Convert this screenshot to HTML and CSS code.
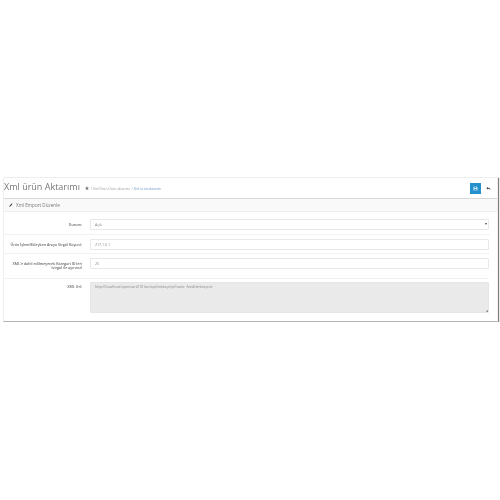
FILE: index.html
```html
<!DOCTYPE html>
<html>
<head>
    <title>Xml ürün Aktarımı</title>
    <link rel="stylesheet" href="styles.css">
</head>
<body>
    <div class="card">
        <div class="page-header">
            <h1>Xml ürün Aktarımı</h1>
            <svg class="home" viewBox="0 0 10 10"><path d="M5 1 0.5 5.2 1.2 5.8 5 2.4 8.8 5.8 9.5 5.2ZM2 6V9.5H4.2V7H5.8V9.5H8V6L5 3.3Z"/></svg>
            <ul class="crumbs">
                <li>/ Xml Ürün Ürün aktarımı</li>
                <li class="current">/ Xml ürün aktarımı</li>
            </ul>
            <div class="buttons">
                <button type="button" class="btn-save"><svg viewBox="0 0 10 10"><path d="M1 1H7.5L9 2.5V9H1ZM3 1.5V4H6.5V1.5ZM3 6V8.5H7V6Z"/></svg></button>
                <button type="button" class="btn-back"><svg viewBox="0 0 10 10"><path d="M4 2 .8 4.6 4 7.2V5.4C6 5.4 7.6 6 8.6 8 8.6 5.4 7 3.6 4 3.6Z"/></svg></button>
            </div>
        </div>
        <div class="panel-heading">
            <svg class="pencil" viewBox="0 0 10 10"><path d="M.8 9.2 1.5 6.6 6.6 1.5 8.5 3.4 3.4 8.5ZM7.2 .9 7.8 .4 9.6 2.2 9.1 2.8Z"/></svg>
            <span>Xml Emport Düzenle</span>
        </div>
        <form class="form">
            <div class="row row-select">
                <label for="status">Durum:</label>
                <div class="field field-select" id="status">Açık<span class="caret"></span></div>
            </div>
            <div class="row row-ip">
                <label for="sep">Ürün İşlemlEkleyken Araya Virgül Koyun):</label>
                <div class="field" id="sep">217.1.0.1</div>
            </div>
            <div class="row row-cat">
                <label for="cat">XML'e dahil edilmeyecek Kategori ID leri<br>(virgül ile ayırınız)</label>
                <div class="field" id="cat">25</div>
            </div>
            <div class="row row-last">
                <label for="url">XML Url:</label>
                <div class="field field-area" id="url">http://localhost/opencart2101an/api/index.php?route=feed/xmlexport<span class="grip"></span></div>
            </div>
        </form>
    </div>
</body>
</html>
```

FILE: styles.css
```css
body {
    margin: 0;
    padding: 177px 2px 0 3px;
    background-color: #ffffff;
    font-family: "Open Sans", sans-serif;
    color: #666666;
}

.card {
    height: 145px;
    box-sizing: border-box;
    background-color: #ffffff;
    border: 1px solid #eeeeee;
    border-bottom: 1px solid #b4b4b4;
    box-shadow: 1px 1px 1px #808080;
    filter: blur(0.4px);
}

.page-header {
    display: flex;
    align-items: center;
    height: 20px;
    padding-right: 3px;
    border-bottom: 1px solid #d8d8d8;
}

h1 {
    margin: 0 0 2px 0;
    font-size: 9px;
    font-weight: 400;
    line-height: 18px;
    color: #777777;
    white-space: nowrap;
}

.home {
    width: 4px;
    height: 4px;
    margin: 0 0 0 5px;
    fill: #666666;
}

.crumbs {
    display: flex;
    gap: 2px;
    margin: 0 0 0 2px;
    padding: 0;
    list-style: none;
    font-size: 3.3px;
    color: #999999;
}

.crumbs .current {
    color: #6f93c4;
}

.buttons {
    display: flex;
    gap: 2px;
    margin-left: auto;
}

.buttons button {
    display: flex;
    align-items: center;
    justify-content: center;
    width: 11px;
    height: 11px;
    padding: 0;
    border: none;
}

.buttons svg {
    width: 5px;
    height: 5px;
}

.btn-save {
    background-color: #2590cc;
    fill: #d8ecf8;
}

.btn-back {
    background-color: #ffffff;
    fill: #333333;
}

.panel-heading {
    display: flex;
    align-items: center;
    gap: 3px;
    height: 12px;
    padding-left: 5px;
    background-color: #f9f9f9;
    border-bottom: 1px solid #eeeeee;
    font-size: 4.6px;
    color: #777777;
}

.pencil {
    width: 4px;
    height: 4px;
    fill: #444444;
}

.form {
    padding: 0 8px 0 0;
}

.row {
    display: flex;
    border-bottom: 1px solid #f2f2f2;
}

.row-select {
    padding: 7px 0 4px;
}

.row-ip {
    padding: 4px 0 3px;
}

.row-cat {
    padding: 4px 0 7px;
}

.row-last {
    border-bottom: none;
    padding-top: 3px;
}

label {
    flex: 0 0 86px;
    padding: 3.5px 8px 0 0;
    box-sizing: border-box;
    font-size: 3.6px;
    font-weight: 600;
    line-height: 4.5px;
    text-align: right;
    color: #666666;
    white-space: nowrap;
}

.field {
    position: relative;
    flex: 1;
    height: 11px;
    padding: 0 4px;
    box-sizing: border-box;
    border: 1px solid #e8e8e8;
    border-radius: 1px;
    font-size: 3.6px;
    line-height: 9px;
    color: #888888;
}

.field-area {
    height: 31px;
    line-height: 7px;
    background-color: #eaeaea;
    border-color: #e6e6e6;
}

.caret {
    position: absolute;
    top: 3px;
    right: 1px;
    border: 1px solid transparent;
    border-top: 2px solid #444444;
    border-bottom: none;
}

.grip {
    position: absolute;
    right: 0;
    bottom: 0;
    width: 3px;
    height: 3px;
    background: linear-gradient(135deg, transparent 50%, #999999 50%);
}
```
